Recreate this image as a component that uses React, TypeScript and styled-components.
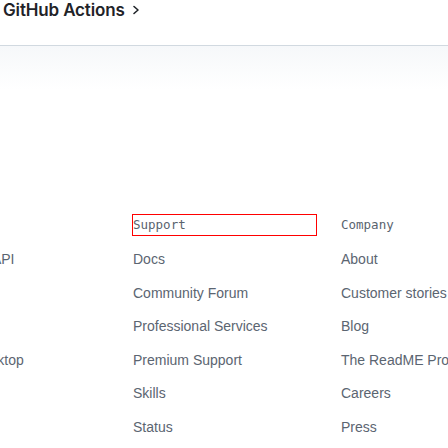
import React from "react";
import styled, { createGlobalStyle } from "styled-components";

const GlobalStyle = createGlobalStyle`
  html, body {
    margin: 0;
    padding: 0;
    background: #ffffff;
    overflow: hidden;
  }
`;

const columns = [
  {
    title: "Platform",
    links: ["Developer API", "Partners", "Electron", "GitHub Desktop"],
  },
  {
    title: "Support",
    links: [
      "Docs",
      "Community Forum",
      "Professional Services",
      "Premium Support",
      "Skills",
      "Status",
    ],
    outlined: true,
  },
  {
    title: "Company",
    links: [
      "About",
      "Customer stories",
      "Blog",
      "The ReadME Project",
      "Careers",
      "Press",
    ],
  },
];

export default function App() {
  return (
    <>
      <GlobalStyle />
      <Page>
        <TopBar>
          <Crumb>
            GitHub Actions
            <svg width="8" height="12" viewBox="0 0 8 12" fill="none">
              <path
                d="M2 2.5l4 3.5-4 3.5"
                stroke="#1f2328"
                strokeWidth="1.6"
                strokeLinecap="round"
                strokeLinejoin="round"
              />
            </svg>
          </Crumb>
        </TopBar>
        <Footer>
          <Grid>
            {columns.map((col) => (
              <Column key={col.title}>
                <Heading $outlined={!!col.outlined}>{col.title}</Heading>
                <LinkList>
                  {col.links.map((l) => (
                    <Item key={l}>
                      <a href="#">{l}</a>
                    </Item>
                  ))}
                </LinkList>
              </Column>
            ))}
          </Grid>
        </Footer>
      </Page>
    </>
  );
}

const Page = styled.div`
  width: 448px;
  height: 448px;
  overflow: hidden;
`;

const TopBar = styled.div`
  height: 46px;
  box-sizing: border-box;
  border-bottom: 1px solid #d1d9e0;
  padding: 0 0 0 3px;
`;

const Crumb = styled.div`
  display: flex;
  align-items: center;
  gap: 7px;
  height: 20px;
  font-family: Inter, "Liberation Sans", sans-serif;
  font-weight: 600;
  font-size: 17px;
  letter-spacing: -0.15px;
  color: #1f2328;
  line-height: 20px;
`;

const Footer = styled.div`
  height: 402px;
  background: linear-gradient(#f6f8fa, #ffffff 44px);
  padding-top: 168px;
  box-sizing: border-box;
`;

const Grid = styled.div`
  display: grid;
  grid-template-columns: repeat(3, 185px);
  column-gap: 23px;
  margin-left: -76px;
`;

const Column = styled.div`
  display: flex;
  flex-direction: column;
`;

const Heading = styled.h2<{ $outlined: boolean }>`
  margin: 0 0 13px;
  height: 22px;
  box-sizing: border-box;
  border: 1px solid ${(p) => (p.$outlined ? "#ff0000" : "transparent")};
  font-family: "DejaVu Sans Mono", "Liberation Mono", monospace;
  font-weight: 400;
  font-size: 12.5px;
  line-height: 19px;
  color: #59636e;
`;

const LinkList = styled.ul`
  list-style: none;
  margin: 0;
  padding: 0;
  display: flex;
  flex-direction: column;
  gap: 12.6px;
`;

const Item = styled.li`
  padding-left: 1px;
  font-family: "Liberation Sans", Arial, sans-serif;
  font-size: 14px;
  line-height: 21px;
  white-space: nowrap;

  a {
    color: #5b6571;
    text-decoration: none;
  }
`;
